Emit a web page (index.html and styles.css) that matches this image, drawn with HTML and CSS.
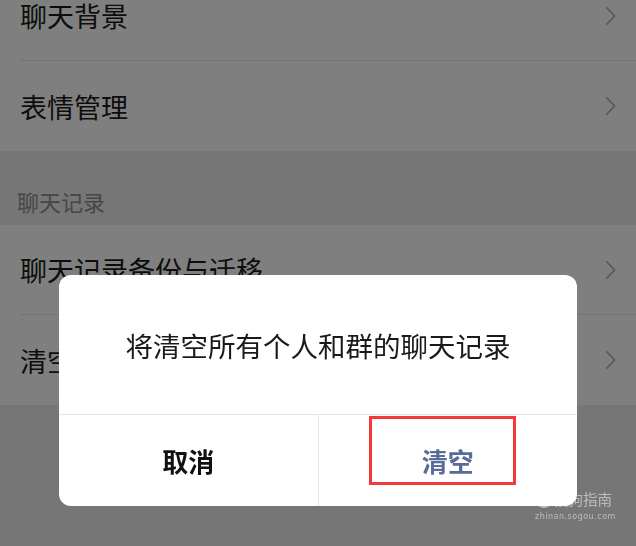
FILE: index.html
```html
<!DOCTYPE html>
<html lang="zh-CN">
<head>
  <meta charset="UTF-8" />
  <meta name="viewport" content="width=device-width, initial-scale=1.0"/>
  <title>聊天设置</title>
  <link rel="stylesheet" href="styles.css">
</head>
<body>
  <div class="page">
    <div class="group first">
      <div class="row">
        <span>聊天背景</span>
        <svg class="chev" viewBox="0 0 12 22"><path d="M1.5 1.5 L10.5 11 L1.5 20.5" /></svg>
      </div>
      <div class="row">
        <span>表情管理</span>
        <svg class="chev" viewBox="0 0 12 22"><path d="M1.5 1.5 L10.5 11 L1.5 20.5" /></svg>
      </div>
    </div>

    <div class="group-title">聊天记录</div>

    <div class="group">
      <div class="row">
        <span>聊天记录备份与迁移</span>
        <svg class="chev" viewBox="0 0 12 22"><path d="M1.5 1.5 L10.5 11 L1.5 20.5" /></svg>
      </div>
      <div class="row">
        <span>清空聊天记录</span>
        <svg class="chev" viewBox="0 0 12 22"><path d="M1.5 1.5 L10.5 11 L1.5 20.5" /></svg>
      </div>
    </div>
  </div>

  <!-- dimmed layer + confirm dialog -->
  <div class="mask">
    <div class="dialog">
      <div class="dialog-msg">将清空所有个人和群的聊天记录</div>
      <div class="dialog-btns">
        <div class="btn cancel">取消</div>
        <div class="btn ok">
          清空
          <span class="mark"></span>
        </div>
      </div>
    </div>
  </div>

  <div class="watermark">
    <div class="wm-top">
      <span class="wm-logo">S</span>
      <span>搜狗指南</span>
    </div>
    <div class="wm-url">zhinan.sogou.com</div>
  </div>
</body>
</html>
```

FILE: styles.css
```css
body {
  margin: 0;
  height: 546px;
  overflow: hidden;
  background: #ededed;
  font-family: "Noto Sans CJK SC", "Noto Sans", sans-serif;
  color: #1a1a1a;
}

.page {
  margin-top: -29px;
}

.group {
  background: #fff;
}

.row {
  height: 90px;
  margin-left: 20px;
  padding-right: 20px;
  display: flex;
  align-items: center;
  justify-content: space-between;
  font-size: 27px;
  border-bottom: 1px solid #e6e6e6;
  box-sizing: border-box;
}

.row:last-child {
  border-bottom: none;
}

.chev {
  width: 11px;
  height: 22px;
  fill: none;
  stroke: #b4b4b8;
  stroke-width: 1.9;
}

.group-title {
  height: 74px;
  display: flex;
  align-items: flex-end;
  padding: 0 0 9px 17px;
  box-sizing: border-box;
  font-size: 22px;
  line-height: 30px;
  color: #8c8c8c;
}

.mask {
  position: fixed;
  inset: 0;
  background: rgba(0, 0, 0, 0.5);
  display: flex;
  justify-content: center;
  align-items: flex-start;
  padding-top: 275px;
}

.dialog {
  width: 518px;
  background: #fff;
  border-radius: 12px;
  overflow: hidden;
}

.dialog-msg {
  height: 140px;
  display: flex;
  align-items: center;
  justify-content: center;
  font-size: 27.5px;
  color: #1a1a1a;
  border-bottom: 1px solid #e5e5e5;
  box-sizing: border-box;
}

.dialog-btns {
  display: flex;
  height: 91px;
}

.btn {
  flex: 1;
  display: flex;
  align-items: center;
  justify-content: center;
  font-size: 26px;
  font-weight: bold;
  position: relative;
}

.cancel {
  color: #111;
  border-right: 1px solid #e5e5e5;
}

.ok {
  color: #586c96;
}

.mark {
  position: absolute;
  left: 50px;
  top: 1px;
  width: 147px;
  height: 69px;
  border: 3px solid #f23a3a;
  box-sizing: border-box;
}

.watermark {
  position: absolute;
  left: 535px;
  top: 489px;
  color: rgba(255, 255, 255, 0.5);
}

.wm-top {
  display: flex;
  align-items: center;
  gap: 1px;
  font-size: 14.5px;
  line-height: 20px;
}

.wm-logo {
  width: 18px;
  height: 17px;
  border: 2px solid rgba(255, 255, 255, 0.5);
  border-radius: 50%;
  box-sizing: border-box;
  font-family: "DejaVu Sans", sans-serif;
  font-weight: bold;
  font-size: 11px;
  line-height: 13px;
  text-align: center;
}

.wm-url {
  font-family: "DejaVu Sans", sans-serif;
  font-size: 8px;
  letter-spacing: 0.5px;
  margin-top: 3px;
}
```
